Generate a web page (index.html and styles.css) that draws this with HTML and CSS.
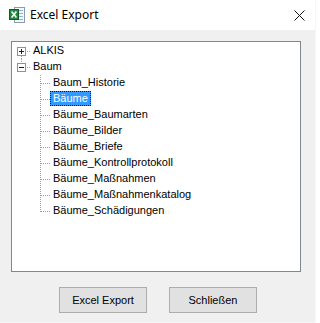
FILE: index.html
```html
<!DOCTYPE html>
<html lang="de">
<head>
<meta charset="utf-8">
<title>Excel Export</title>
<link rel="stylesheet" href="styles.css">
</head>
<body>
<div class="window">
  <div class="titlebar">
    <svg class="appicon" width="16" height="17" viewBox="0 0 16 17">
      <rect x="5.5" y="0.5" width="10" height="15" fill="#f4f7fb" stroke="#8a9bb0"/>
      <line x1="10" y1="3.5" x2="14" y2="3.5" stroke="#8fb3d9"/>
      <line x1="10" y1="6.5" x2="14" y2="6.5" stroke="#8fb3d9"/>
      <line x1="10" y1="9.5" x2="14" y2="9.5" stroke="#8fb3d9"/>
      <line x1="7" y1="12.5" x2="14" y2="12.5" stroke="#8fb3d9"/>
      <rect x="0.5" y="2.5" width="9" height="10" fill="#1f8a3c" stroke="#0d5e24"/>
      <path d="M2.6 4.6 L7.4 10.4 M7.4 4.6 L2.6 10.4" stroke="#ffffff" stroke-width="1.6"/>
    </svg>
    <span class="title">Excel Export</span>
    <svg class="close" width="11" height="11" viewBox="0 0 11 11">
      <path d="M0.5 0.5 L10.5 10.5 M10.5 0.5 L0.5 10.5" stroke="#111" stroke-width="1"/>
    </svg>
  </div>
  <div class="body">
    <div class="tree">
      <div class="row"><span class="g0 root-first"><span class="box plus"></span></span><span class="lbl">ALKIS</span></div>
      <div class="row"><span class="g0 root-last"><span class="box minus"></span></span><span class="lbl">Baum</span></div>
      <div class="row"><span class="g0"></span><span class="g1"></span><span class="lbl">Baum_Historie</span></div>
      <div class="row"><span class="g0"></span><span class="g1"></span><span class="lbl sel">Bäume</span></div>
      <div class="row"><span class="g0"></span><span class="g1"></span><span class="lbl">Bäume_Baumarten</span></div>
      <div class="row"><span class="g0"></span><span class="g1"></span><span class="lbl">Bäume_Bilder</span></div>
      <div class="row"><span class="g0"></span><span class="g1"></span><span class="lbl">Bäume_Briefe</span></div>
      <div class="row"><span class="g0"></span><span class="g1"></span><span class="lbl">Bäume_Kontrollprotokoll</span></div>
      <div class="row"><span class="g0"></span><span class="g1"></span><span class="lbl">Bäume_Maßnahmen</span></div>
      <div class="row"><span class="g0"></span><span class="g1"></span><span class="lbl">Bäume_Maßnahmenkatalog</span></div>
      <div class="row"><span class="g0"></span><span class="g1 last"></span><span class="lbl">Bäume_Schädigungen</span></div>
    </div>
    <div class="buttons">
      <button class="btn">Excel Export</button>
      <button class="btn">Schließen</button>
    </div>
  </div>
</div>
</body>
</html>
```

FILE: styles.css
```css
html, body {
  margin: 0;
  padding: 0;
  background: #ffffff;
}
.window {
  width: 315px;
  height: 322px;
  display: flex;
  flex-direction: column;
  border-right: 1px solid #f7f7f7;
  border-bottom: 1px solid #f7f7f7;
}
.titlebar {
  height: 30px;
  background: #ffffff;
  display: flex;
  align-items: center;
  flex: none;
}
.appicon {
  margin-left: 9px;
  margin-top: 0px;
}
.title {
  margin-left: 5px;
  font-family: "Segoe UI", "Noto Sans", sans-serif;
  font-size: 12px;
  color: #000;
  flex: 1;
  padding-bottom: 1px;
}
.close {
  margin-right: 10px;
  margin-top: 1px;
}
.body {
  flex: 1;
  background: #f0f0f0;
  padding-top: 11px;
  display: flex;
  flex-direction: column;
}
.tree {
  margin-left: 11px;
  width: 288px;
  height: 228px;
  border: 1px solid #828790;
  background: #ffffff;
  font-family: "Liberation Sans", Arial, sans-serif;
  font-size: 11px;
  color: #000;
  padding-top: 1px;
  box-sizing: content-box;
}
.row {
  height: 16px;
  display: flex;
  align-items: flex-start;
}
.g0 {
  width: 18px;
  height: 16px;
  flex: none;
}
.g0.root-first {
  background-image:
    repeating-linear-gradient(to bottom, #a0a0a0 0 1px, transparent 1px 2px),
    repeating-linear-gradient(to right, #a0a0a0 0 1px, transparent 1px 2px);
  background-size: 1px 3px, 4px 1px;
  background-position: 9px 13px, 15px 8px;
  background-repeat: no-repeat;
}
.g0.root-last {
  background-image:
    repeating-linear-gradient(to bottom, #a0a0a0 0 1px, transparent 1px 2px),
    repeating-linear-gradient(to right, #a0a0a0 0 1px, transparent 1px 2px);
  background-size: 1px 4px, 4px 1px;
  background-position: 9px 0, 15px 8px;
  background-repeat: no-repeat;
}
.g1 {
  width: 20px;
  height: 16px;
  flex: none;
  background-image:
    repeating-linear-gradient(to bottom, #a0a0a0 0 1px, transparent 1px 2px),
    repeating-linear-gradient(to right, #a0a0a0 0 1px, transparent 1px 2px);
  background-size: 1px 16px, 9px 1px;
  background-position: 10px 0, 11px 8px;
  background-repeat: no-repeat;
}
.g1.last {
  background-size: 1px 9px, 9px 1px;
}
.box {
  display: block;
  width: 7px;
  height: 7px;
  margin-left: 5px;
  margin-top: 4px;
  border: 1px solid #919191;
  background-color: #ffffff;
  background-repeat: no-repeat;
}
.box.plus {
  background-image: linear-gradient(#1a1a3a, #1a1a3a), linear-gradient(#1a1a3a, #1a1a3a);
  background-size: 5px 1px, 1px 5px;
  background-position: 1px 3px, 3px 1px;
}
.box.minus {
  background-image: linear-gradient(#1a1a3a, #1a1a3a);
  background-size: 5px 1px;
  background-position: 1px 3px;
}
.lbl {
  height: 15px;
  line-height: 15px;
  padding: 0 3px;
  white-space: nowrap;
}
.lbl.sel {
  background: #3399ff;
  color: #ffffff;
  border: 1px dotted #10102a;
  height: 13px;
  line-height: 13px;
  padding: 0 2px;
}
.buttons {
  display: flex;
  justify-content: center;
  gap: 22px;
  margin-top: 15px;
  padding-left: 1px;
}
.btn {
  width: 88px;
  height: 26px;
  background: #e1e1e1;
  border: 1px solid #adadad;
  font-family: "Liberation Sans", Arial, sans-serif;
  font-size: 11px;
  color: #000;
  padding: 0;
  margin: 0;
}
```
